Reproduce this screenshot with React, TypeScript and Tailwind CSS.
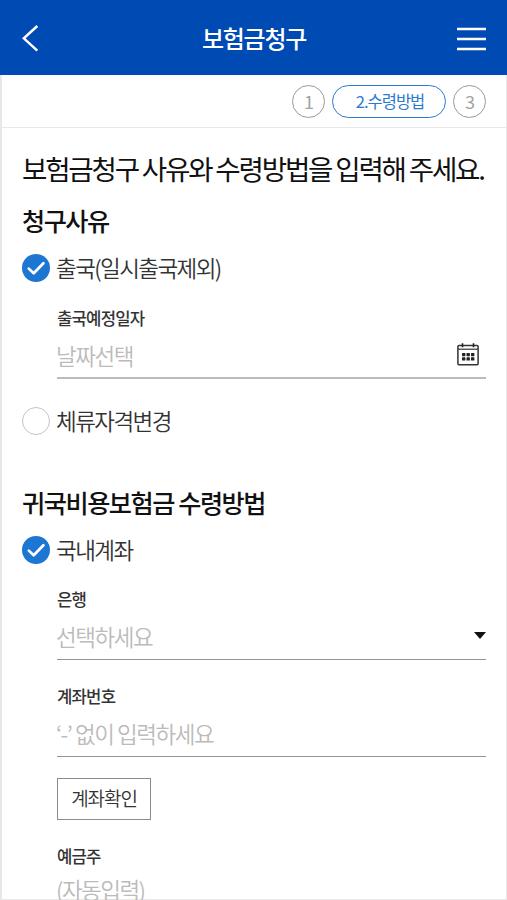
import React from "react";

const steps = [
  { id: 1, label: "1", active: false },
  { id: 2, label: "2.수령방법", active: true },
  { id: 3, label: "3", active: false },
];

function CheckOption({ label, checked }: { label: string; checked?: boolean }) {
  return (
    <div className="flex items-center h-7 gap-1.5">
      {checked ? (
        <svg viewBox="0 0 28 28" className="w-7 h-7 shrink-0">
          <circle cx="14" cy="14" r="14" fill="#1d76d2" />
          <path
            d="M6.8 14.6l4.9 4.7 9.7-10"
            fill="none"
            stroke="#fff"
            strokeWidth="2.7"
            strokeLinecap="round"
            strokeLinejoin="round"
          />
        </svg>
      ) : (
        <span className="w-7 h-7 shrink-0 rounded-full border border-[#c4c4c4] bg-white" />
      )}
      <span className="pb-[3px] text-[22.5px] leading-7 font-[350] tracking-[-0.07em] text-[#333]">{label}</span>
    </div>
  );
}

function Field({
  label,
  placeholder,
  icon,
  thick,
}: {
  label: string;
  placeholder: string;
  icon?: React.ReactNode;
  thick?: boolean;
}) {
  return (
    <div className={thick ? "h-[71px] border-b-2 border-[#bbb]" : "h-[71px] border-b border-[#949494]"}>
      <p className="h-5 text-[16.7px] leading-5 font-medium text-[#333]">{label}</p>
      <div className="flex items-center justify-between h-[50px]">
        <span className="pt-[3px] -ml-px text-[22.5px] leading-7 font-[350] tracking-[-0.065em] text-[#bbb]">{placeholder}</span>
        {icon}
      </div>
    </div>
  );
}

function CalendarIcon() {
  return (
    <svg viewBox="0 0 22 23" className="w-[22px] h-[23px] mr-[7px] mt-0.5">
      <rect x="0.9" y="2.4" width="20.2" height="19.4" rx="1" fill="none" stroke="#333" strokeWidth="1.5" />
      <path d="M1 6.2h20" stroke="#333" strokeWidth="1.2" />
      <path d="M5.5 0.3v4M16.5 0.3v4" stroke="#222" strokeWidth="1.6" />
      <g fill="#222">
        <rect x="5" y="10" width="3.4" height="3.2" rx="0.6" />
        <rect x="9.5" y="10" width="3.4" height="3.2" rx="0.6" />
        <rect x="14" y="10" width="3.4" height="3.2" rx="0.6" />
        <rect x="5" y="14.3" width="3.4" height="3.2" rx="0.6" />
        <rect x="9.5" y="14.3" width="3.4" height="3.2" rx="0.6" />
        <rect x="14" y="14.3" width="3.4" height="3.2" rx="0.6" />
      </g>
    </svg>
  );
}

export default function App() {
  return (
    <div className="w-full h-[900px] overflow-hidden bg-white font-['Noto_Sans_CJK_KR',sans-serif] tracking-[-0.05em]">
      {/* Header */}
      <header className="flex items-center justify-between h-[75px] pl-[22px] pr-[21px] bg-[#004ab3] text-white">
        <svg viewBox="0 0 17 27" className="w-[17px] h-[27px] mr-3 mt-0.5">
          <path d="M15.3 1L1.8 13.3l13.5 12.3" fill="none" stroke="#fff" strokeWidth="2.5" />
        </svg>
        <h1 className="text-2xl leading-8 font-medium tracking-[-0.053em]">보험금청구</h1>
        <svg viewBox="0 0 29 24" className="w-[29px] h-6 mt-0.5">
          <path d="M0 2h29M0 12h29M0 22h29" stroke="#fff" strokeWidth="2.6" />
        </svg>
      </header>

      <div className="h-[825px] border-x-2 border-b border-[#e8e8e8] border-r-[1px]">
        {/* Steps */}
        <ol className="flex items-center justify-end gap-[7px] h-[53px] pr-5 border-b border-[#e8e8e8]">
          {steps.map((step) => (
            <li
              key={step.id}
              className={
                step.active
                  ? "flex items-center justify-center w-[114px] h-[33px] rounded-full border border-[#2b7ad2] pl-0.5 text-[16.5px] text-[#2b7ad2] tracking-[-0.06em]"
                  : "flex items-center justify-center w-[33px] h-[33px] rounded-full border border-[#999] pb-px text-lg text-[#a3a3a3]"
              }
            >
              {step.label}
            </li>
          ))}
        </ol>

        <main className="pl-5 pr-5">
          <h2 className="pt-[22px] text-[27.6px] leading-9 tracking-[-0.08em] whitespace-nowrap text-[#111]">
            보험금청구 사유와 수령방법을 입력해 주세요.
          </h2>

          {/* Reason */}
          <section className="pt-[18px]">
            <h3 className="text-[25.2px] leading-8 font-medium tracking-[-0.06em] text-[#111]">청구사유</h3>
            <div className="pt-[18px]">
              <CheckOption label="출국(일시출국제외)" checked />
            </div>
            <div className="pt-[26px] pl-[35px]">
              <Field label="출국예정일자" placeholder="날짜선택" icon={<CalendarIcon />} thick />
            </div>
            <div className="pt-7">
              <CheckOption label="체류자격변경" />
            </div>
          </section>

          {/* Payout method */}
          <section className="pt-[51px]">
            <h3 className="text-[25.2px] leading-8 font-medium tracking-[-0.058em] text-[#111]">귀국비용보험금 수령방법</h3>
            <div className="pt-[18px]">
              <CheckOption label="국내계좌" checked />
            </div>
            <div className="flex flex-col gap-[26px] pt-[25px] pl-[35px]">
              <Field
                label="은행"
                placeholder="선택하세요"
                icon={
                  <svg viewBox="0 0 12 8" className="w-3 h-2 mt-[3px]">
                    <path d="M0 0h12L6 7z" fill="#111" />
                  </svg>
                }
              />
              <Field label="계좌번호" placeholder="‘-’ 없이 입력하세요" />
            </div>
            <div className="pt-[21px] pl-[35px]">
              <button className="flex items-center justify-center w-[94px] h-[42px] border border-[#8c8c8c] pb-px text-[19px] font-[350] text-[#333] tracking-[-0.055em]">
                계좌확인
              </button>
            </div>
            <div className="pt-[26px] pl-[35px]">
              <p className="h-5 text-[16.7px] leading-5 font-medium text-[#333]">예금주</p>
              <p className="pt-[9px] -ml-px text-[22.5px] leading-7 font-[350] tracking-[-0.068em] text-[#bbb]">(자동입력)</p>
            </div>
          </section>
        </main>
      </div>
    </div>
  );
}
